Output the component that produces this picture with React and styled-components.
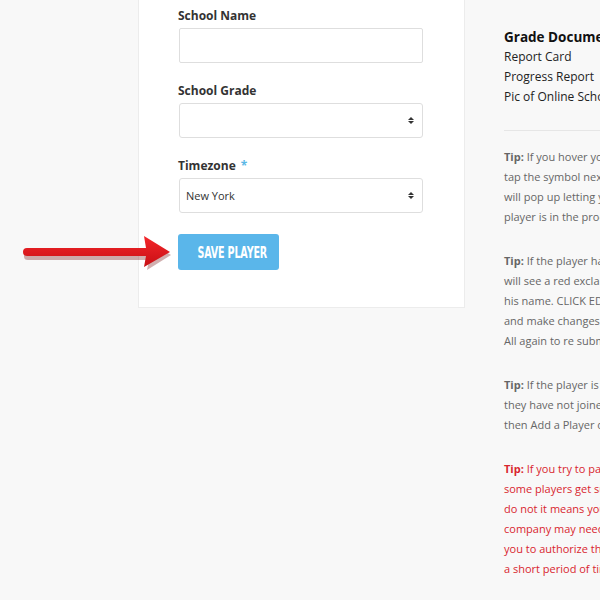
import styled, { createGlobalStyle } from "styled-components";

const GlobalStyle = createGlobalStyle`
  html, body {
    margin: 0;
    padding: 0;
    background: #f8f8f8;
    overflow: hidden;
  }
  body {
    font-family: "Open Sans", "Liberation Sans", sans-serif;
  }
`;

const Page = styled.main`
  display: flex;
  align-items: flex-start;
  gap: 39px;
  padding-left: 138px;
  width: 900px;
  height: 600px;
`;

const Card = styled.section`
  width: 246px;
  padding: 8px 40px 37px 39px;
  background: #fff;
  border: 1px solid #ececec;
  border-top: none;
  display: flex;
  flex-direction: column;
  gap: 20px;
`;

const Field = styled.div`
  display: flex;
  flex-direction: column;
  gap: 4px;
`;

const Label = styled.label`
  font-size: 12px;
  line-height: 16px;
  font-weight: 700;
  color: #333;
`;

const Required = styled.span`
  color: #5bb8e6;
  margin-left: 5px;
`;

const Input = styled.div`
  height: 33px;
  margin-left: 1px;
  width: 242px;
  border: 1px solid #dedede;
  border-radius: 2px;
  background: #fff;
`;

const Select = styled(Input)`
  display: flex;
  align-items: center;
  justify-content: space-between;
  padding: 0 8px 0 6px;
  width: 228px;
  border-radius: 3px;
  font-size: 11px;
  color: #333;
`;

const Arrows = styled.span`
  display: flex;
  flex-direction: column;
  gap: 1px;
  &::before, &::after {
    content: "";
    border-left: 3px solid transparent;
    border-right: 3px solid transparent;
  }
  &::before { border-bottom: 3.5px solid #333; }
  &::after { border-top: 3.5px solid #333; }
`;

const ButtonRow = styled.div`
  position: relative;
  margin-top: 1px;
`;

const SaveButton = styled.button`
  width: 101px;
  height: 36px;
  padding: 0;
  border: none;
  border-radius: 3px;
  background: #5ab6ea;
  color: #fff;
  white-space: nowrap;
  font-family: "DejaVu Sans", "Liberation Sans", sans-serif;
  font-weight: 700;
  font-size: 15px;
  span {
    display: inline-block;
    transform: scaleX(0.64);
    letter-spacing: -0.3px;
    margin-top: 2px;
  }
`;

const Pointer = styled.svg`
  position: absolute;
  left: -156px;
  top: 1px;
`;

const Side = styled.aside`
  width: 300px;
  padding-top: 27px;
  color: #222;
`;

const Heading = styled.h3`
  margin: 0;
  font-size: 13.5px;
  line-height: 20px;
  font-weight: 700;
  color: #111;
`;

const DocList = styled.ul`
  list-style: none;
  margin: 0;
  padding: 0;
  font-size: 12px;
  line-height: 20px;
`;

const Divider = styled.hr`
  border: none;
  border-top: 1px solid #e6e6e6;
  margin: 23px 0 16px;
`;

const Tip = styled.p`
  margin: 0 0 24px;
  font-size: 11px;
  line-height: 20px;
  white-space: nowrap;
  color: ${(p) => (p.$alert ? "#d8262f" : "#666")};
  b { font-weight: 700; }
`;

const tips = [
  {
    lines: [
      "If you hover your mouse over or",
      "tap the symbol next to the player a box",
      "will pop up letting you know the",
      "player is in the process of approval.",
    ],
  },
  {
    lines: [
      "If the player has been rejected you",
      "will see a red exclamation point next to",
      "his name. CLICK EDIT to open the player",
      "and make changes and then click Save",
      "All again to re submit the player.",
    ],
  },
  {
    lines: [
      "If the player is not in the list",
      "they have not joined your team yet",
      "then Add a Player on this page.",
    ],
  },
  {
    alert: true,
    lines: [
      "If you try to pay for players and",
      "some players get submitted and some",
      "do not it means your credit card",
      "company may need to be contacted for",
      "you to authorize the transaction for",
      "a short period of time.",
    ],
  },
];

const App = () => {
  return (
    <>
      <GlobalStyle />
      <Page>
        <Card>
          <Field>
            <Label>School Name</Label>
            <Input />
          </Field>
          <Field>
            <Label>School Grade</Label>
            <Select>
              <span />
              <Arrows />
            </Select>
          </Field>
          <Field>
            <Label>
              Timezone<Required>*</Required>
            </Label>
            <Select>
              <span>New York</span>
              <Arrows />
            </Select>
          </Field>
          <ButtonRow>
            <Pointer width="150" height="36" viewBox="0 0 150 36">
              <defs>
                <linearGradient id="shaft" x1="0" y1="0" x2="0" y2="1">
                  <stop offset="0" stopColor="#f4262a" />
                  <stop offset="1" stopColor="#c70f14" />
                </linearGradient>
              </defs>
              <path d="M5 16 L126 16 L124 3 L148 18 L124 33 L126 23 L5 23 Q1 23 1 19.5 Q1 16 5 16 Z" fill="#7a1a1a" opacity="0.35" transform="translate(1 2)" />
              <path d="M5 13 L124 13 L122 1 L148 17 L122 32 L124 21 L5 21 Q1 21 1 17 Q1 13 5 13 Z" fill="url(#shaft)" />
            </Pointer>
            <SaveButton>
              <span>SAVE PLAYER</span>
            </SaveButton>
          </ButtonRow>
        </Card>
        <Side>
          <Heading>Grade Documents</Heading>
          <DocList>
            <li>Report Card</li>
            <li>Progress Report</li>
            <li>Pic of Online School Grades</li>
          </DocList>
          <Divider />
          {tips.map((tip, i) => (
            <Tip key={i} $alert={tip.alert}>
              <b>Tip:</b> {tip.lines[0]}
              {tip.lines.slice(1).map((line, j) => (
                <span key={j}>
                  <br />
                  {line}
                </span>
              ))}
            </Tip>
          ))}
        </Side>
      </Page>
    </>
  );
};

export default App;
